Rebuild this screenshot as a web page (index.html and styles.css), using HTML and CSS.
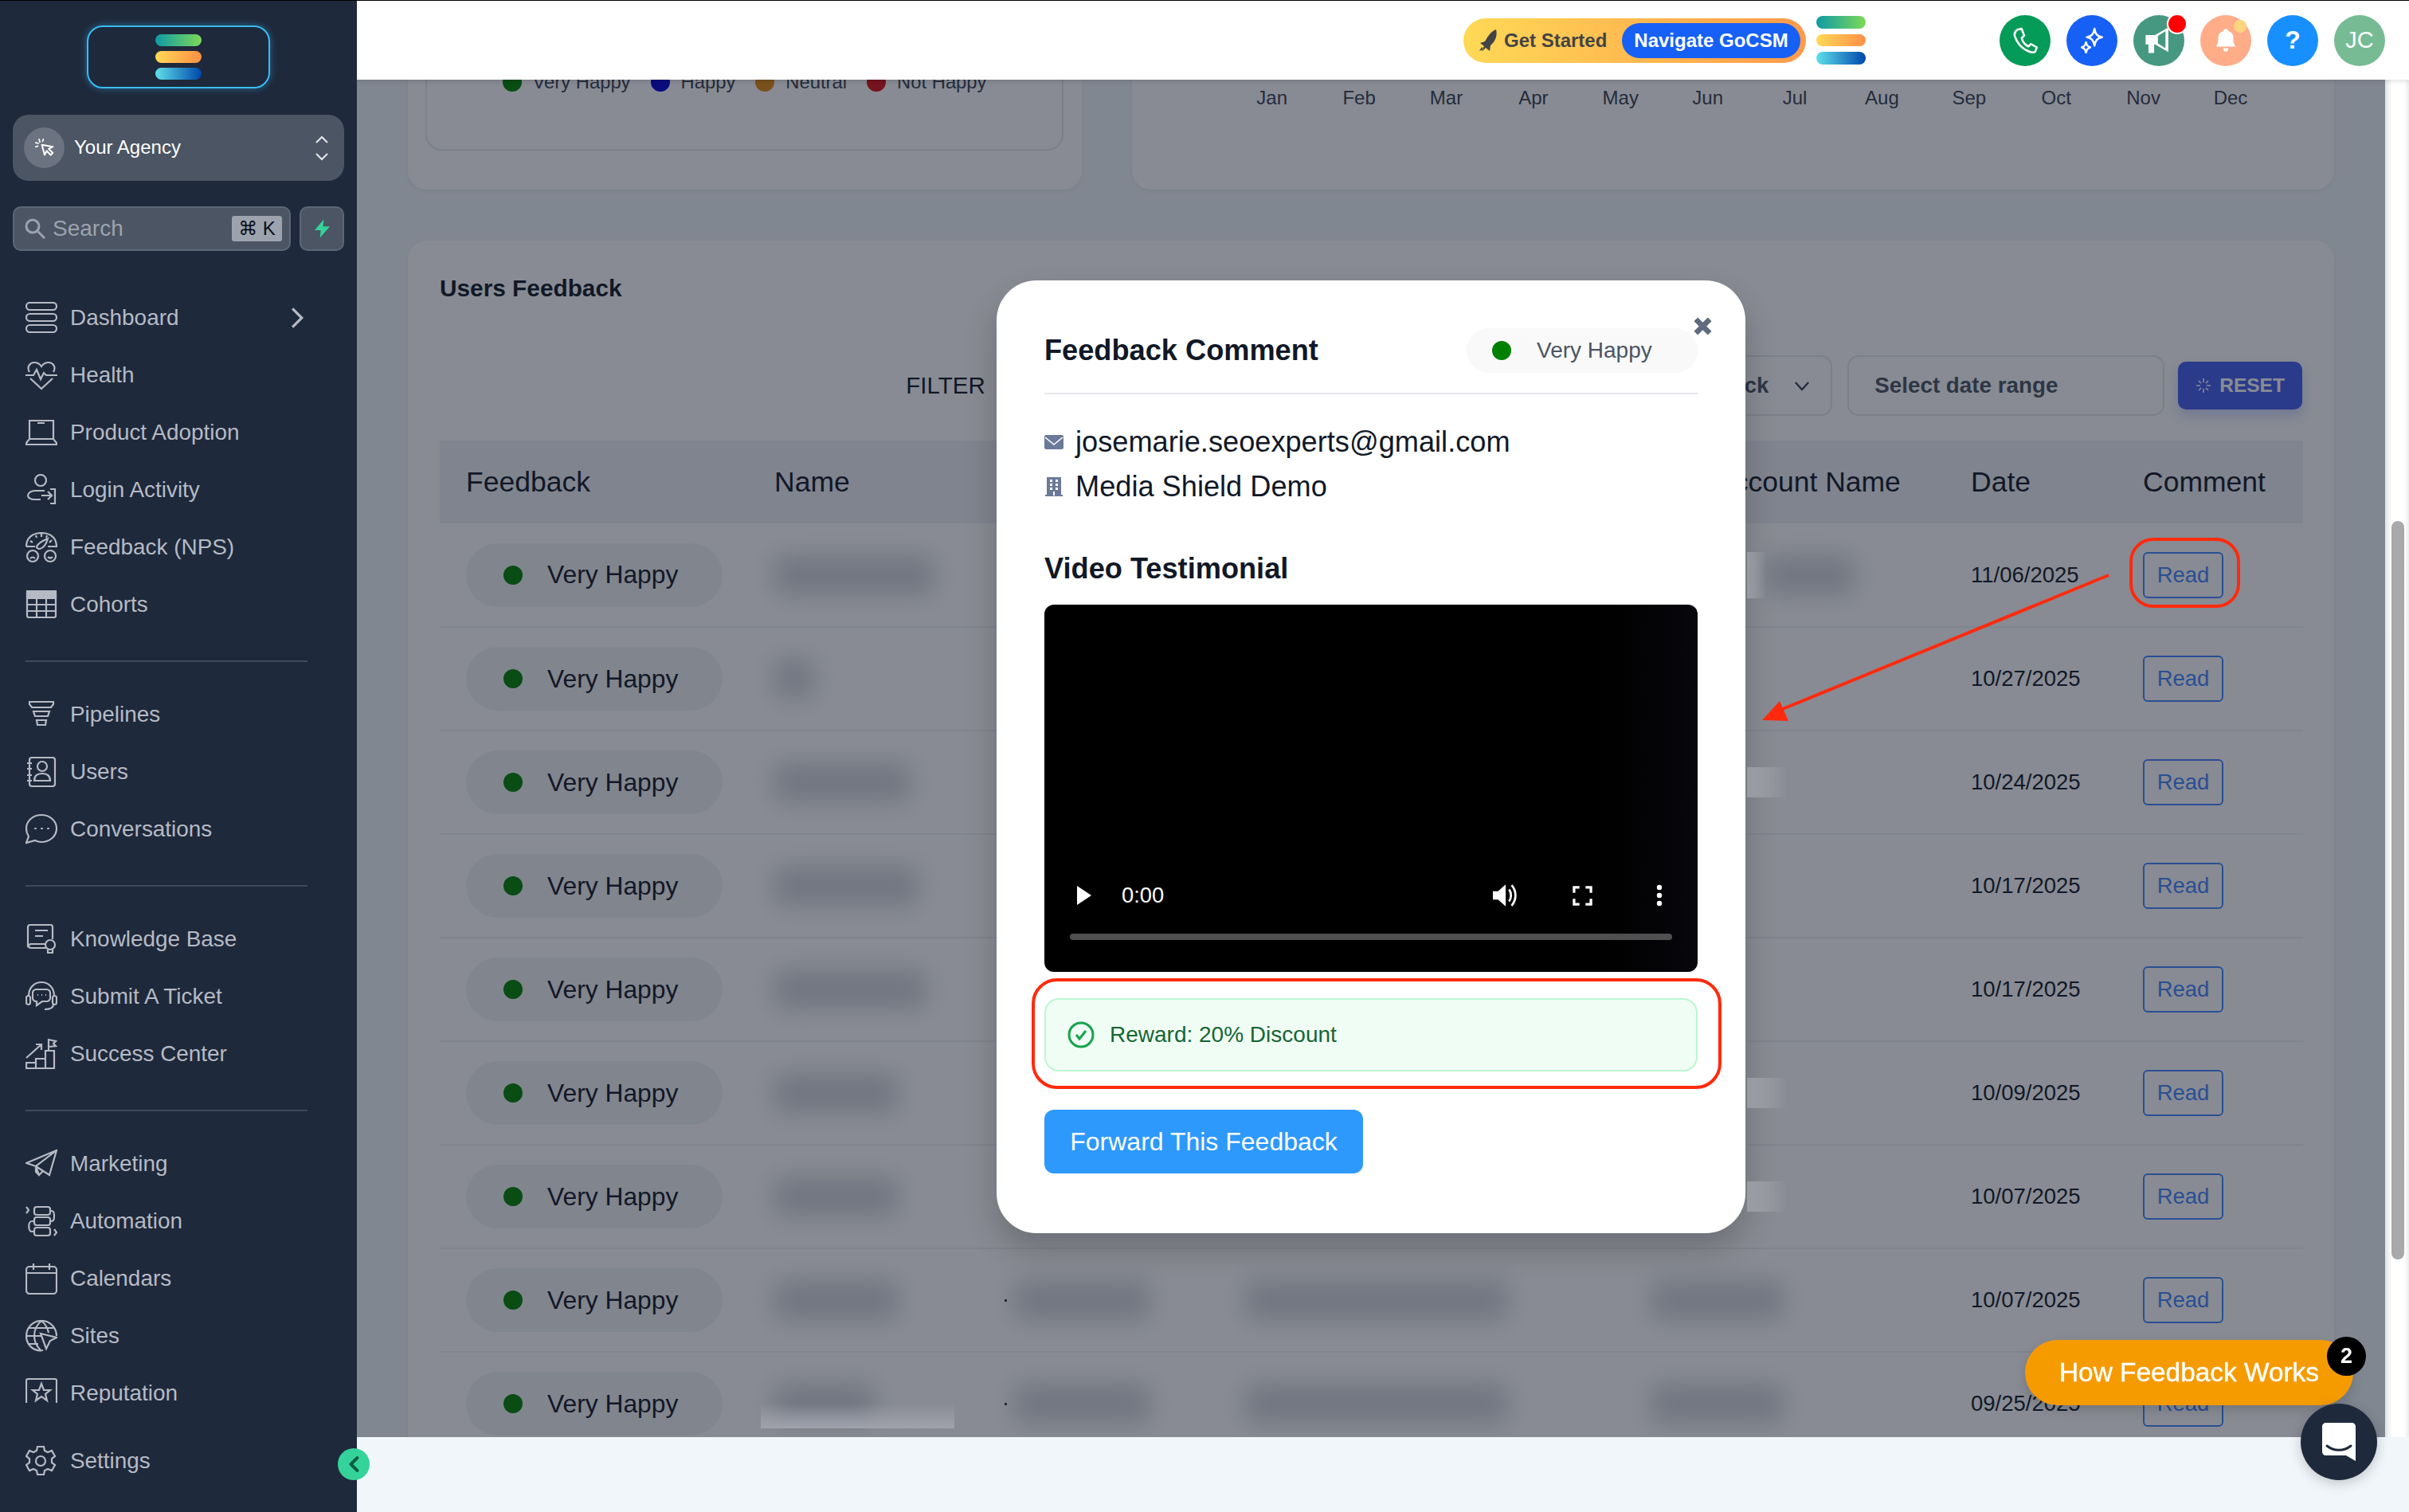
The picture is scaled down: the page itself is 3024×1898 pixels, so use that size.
FILE: index.html
```html
<!DOCTYPE html>
<html lang="en">
<head>
    <meta charset="UTF-8">
    <title>Users Feedback</title>
    <link rel="stylesheet" href="styles.css">
</head>
<body>
<div class="app">
    <aside class="sidebar">
        <div class="logo-box">
            <div class="logo-bars">
                <span class="bar bar-green"></span>
                <span class="bar bar-orange"></span>
                <span class="bar bar-blue"></span>
            </div>
        </div>
        <div class="agency">
            <span class="agency-avatar">
                <svg viewBox="0 0 28 28" class="agency-icon"><path d="M10 9l4 15 3-6 6 6 3-3-6-6 6-3z" fill="none" stroke="#fff" stroke-width="2.4" stroke-linejoin="round"/><path d="M6 1l1 4M1 6l4 1M1 12l3-1M12 1l-1 3" stroke="#fff" stroke-width="2" stroke-linecap="round"/></svg>
            </span>
            <span class="agency-name">Your Agency</span>
            <svg viewBox="0 0 16 32" class="agency-arrows"><path d="M1 9l7-7 7 7M1 23l7 7 7-7" fill="none" stroke="#e5e7eb" stroke-width="2"/></svg>
        </div>
        <div class="search-row">
            <div class="search">
                <svg viewBox="0 0 26 26" class="search-icon"><circle cx="10" cy="10" r="8" fill="none" stroke="#9ca3af" stroke-width="3"/><path d="M16 16l9 9" stroke="#9ca3af" stroke-width="3"/></svg>
                <span class="search-text">Search</span>
                <kbd class="search-key">⌘ K</kbd>
            </div>
            <div class="bolt-btn">
                <svg viewBox="0 0 22 24" class="bolt-icon"><path d="M13 0L1 14h8l-1 10 13-15h-9z" fill="#34d399"/></svg>
            </div>
        </div>

        <nav class="nav">
            <a class="nav-item">
                <svg class="nav-icon" viewBox="0 0 40 40"><rect x="1" y="1" width="38" height="9" rx="4.5"/><rect x="1" y="15" width="38" height="9" rx="4.5"/><rect x="1" y="29" width="38" height="9" rx="4.5"/></svg>
                Dashboard
                <svg class="nav-more" viewBox="0 0 16 26"><path d="M2 2l11 11L2 24" fill="none" stroke="currentColor" stroke-width="3"/></svg>
            </a>
            <a class="nav-item">
                <svg class="nav-icon" viewBox="0 0 40 40"><path d="M5 16c-4-7 1-12 6-12 4 0 7 2 9 5 2-3 5-5 9-5 5 0 10 5 6 12M6 24l14 13 14-13"/><path d="M0 20h10l4-7 5 12 4-8 3 3h14"/></svg>
                Health
            </a>
            <a class="nav-item">
                <svg class="nav-icon" viewBox="0 0 40 40"><path d="M5 28V5h30v23M1 33l4-5h30l4 5v2H1zM15 8h9"/></svg>
                Product Adoption
            </a>
            <a class="nav-item">
                <svg class="nav-icon" viewBox="0 0 40 40"><circle cx="19" cy="8" r="7"/><path d="M24 21H12c-5 0-9 3-9 6s4 5 8 5h8M20 27h13M28 22l5 5-5 5M31 19h6v18h-6"/></svg>
                Login Activity
            </a>
            <a class="nav-item">
                <svg class="nav-icon" viewBox="0 0 40 40"><path d="M1 19C1 8 9 2 20 2s19 6 19 17H28M1 19h11M6 12l3 2M20 3v4M33 11l-3 3M13 5l1 3M27 5l-1 3"/><path d="M14 19c2-4 7-7 14-10-2 7-6 12-10 13-2 0-4-1-4-3z"/><circle cx="9" cy="31" r="7"/><circle cx="31" cy="31" r="7"/><path d="M6 34c2-2 4-2 6 0M28 32c2 2 4 2 6 0"/></svg>
                Feedback (NPS)
            </a>
            <a class="nav-item">
                <svg class="nav-icon" viewBox="0 0 40 40"><rect x="2" y="3" width="36" height="33" rx="2"/><path d="M2 3h36v9H2z" class="fill-on"/><path d="M2 20h36M2 28h36M14 12v24M26 12v24"/></svg>
                Cohorts
            </a>
            <hr class="nav-line">
            <a class="nav-item">
                <svg class="nav-icon" viewBox="0 0 40 40"><path d="M5 4h30v3l-3 4H8L5 7zM10 16h20l-2 6H12zM14 27h12l-1 6H15z"/></svg>
                Pipelines
            </a>
            <a class="nav-item">
                <svg class="nav-icon" viewBox="0 0 40 40"><rect x="5" y="2" width="32" height="36" rx="3"/><circle cx="21" cy="13" r="6"/><path d="M11 31c0-6 4-9 10-9s10 3 10 9zM2 9h6M2 16h6M2 24h6M2 31h6"/></svg>
                Users
            </a>
            <a class="nav-item">
                <svg class="nav-icon" viewBox="0 0 40 40"><path d="M20 2c10 0 19 7 19 17s-9 17-19 17c-3 0-6-1-8-2l-11 3 3-8c-2-3-3-6-3-10C1 9 10 2 20 2z"/><path d="M12 19h1M20 19h1M28 19h1" stroke-linecap="round"/></svg>
                Conversations
            </a>
            <hr class="nav-line">
            <a class="nav-item">
                <svg class="nav-icon" viewBox="0 0 40 40"><path d="M26 31H7c-4 0-4-5 0-5h19M7 26c-2 0-3 1-4 2V5c0-2 1-3 3-3h26c1 0 2 1 2 3v15"/><path d="M12 9h16M12 16h10"/><circle cx="31" cy="27" r="6"/><path d="M28 33v4h6v-4"/></svg>
                Knowledge Base
            </a>
            <a class="nav-item">
                <svg class="nav-icon" viewBox="0 0 40 40"><path d="M4 19C4 9 11 2 20 2s16 7 16 17M35 30c0 4-4 6-11 6"/><rect x="1" y="19" width="5" height="11" rx="2.5"/><rect x="34" y="19" width="5" height="11" rx="2.5"/><path d="M13 11h14c2 0 4 2 4 4v7c0 2-2 4-4 4h-6l-7 5v-5h-1c-2 0-4-2-4-4v-7c0-2 2-4 4-4zM15 18h1M20 18h1M25 18h1"/></svg>
                Submit A Ticket
            </a>
            <a class="nav-item">
                <svg class="nav-icon" viewBox="0 0 40 40"><path d="M1 38v-7h12v7zM13 38V26h12v12zM25 38V16h11v22zM1 38h36M1 25L20 8M13 8h7v7"/><path d="M29 16V2l9 2-3 3 3 3-9 1"/></svg>
                Success Center
            </a>
            <hr class="nav-line">
            <a class="nav-item">
                <svg class="nav-icon" viewBox="0 0 40 40"><path d="M39 3L1 19l12 4 17 11zM39 3L13 23l4 11 5-5M13 23v7l4 4"/></svg>
                Marketing
            </a>
            <a class="nav-item">
                <svg class="nav-icon" viewBox="0 0 40 40"><rect x="11" y="2" width="20" height="10" rx="3"/><rect x="11" y="15" width="20" height="10" rx="3"/><rect x="11" y="28" width="20" height="10" rx="3"/><path d="M31 7h2c4 0 4 13 0 13h-2M11 20H8c-5 0-5 13 0 13h3M1 2l3 4-3 4M36 30l3 4-3 4"/></svg>
                Automation
            </a>
            <a class="nav-item">
                <svg class="nav-icon" viewBox="0 0 40 40"><rect x="1" y="5" width="38" height="34" rx="4"/><path d="M1 13h38M10 1v8M30 1v8"/></svg>
                Calendars
            </a>
            <a class="nav-item">
                <svg class="nav-icon" viewBox="0 0 40 40"><path d="M22 38C10 40 1 31 1 20a19 19 0 0 1 38 0M20 1c-6 5-9 12-9 19s3 13 8 18M20 1c5 4 8 10 9 15M4 10h32M1 20h20M4 30h12"/><path d="M19 17l20 5-8 4-5 10z"/></svg>
                Sites
            </a>
            <a class="nav-item">
                <svg class="nav-icon" viewBox="0 0 40 40"><path d="M1 40V4c0-1 1-2 2-2h34c1 0 2 1 2 2v36"/><path d="M20 8l3 8h8l-6 5 2 8-7-5-7 5 2-8-6-5h8z"/></svg>
                Reputation
            </a>
        </nav>

        <a class="nav-item nav-settings">
            <svg class="nav-icon" viewBox="0 0 40 40"><circle cx="19" cy="20" r="6"/><path d="M15 2h8l1 5 4 2 5-2 4 7-4 3v5l4 3-4 7-5-2-4 2-1 5h-8l-1-5-4-2-5 2-4-7 4-3v-5l-4-3 4-7 5 2 4-2z"/></svg>
            Settings
        </a>
        <button class="collapse-btn">
            <svg viewBox="0 0 16 22"><path d="M13 2L4 11l9 9" fill="none" stroke="#0e5a45" stroke-width="4.5" stroke-linecap="round" stroke-linejoin="round"/></svg>
        </button>
    </aside>

    <div class="main">
        <header class="topbar">
            <div class="start-pill">
                <svg viewBox="0 0 24 28" class="rocket"><path d="M22 0c2 8-1 15-7 20l-1 7-5-4-4 4-1-1 3-5-5-4 6-2C12 8 16 2 22 0zM4 22l-3 5 5-2z" fill="#444"/></svg>
                <span class="start-label">Get Started</span>
                <span class="start-btn">Navigate GoCSM</span>
            </div>
            <div class="mini-logo">
                <span class="bar bar-green"></span>
                <span class="bar bar-orange"></span>
                <span class="bar bar-blue"></span>
            </div>
            <div class="top-icons">
                <span class="top-icon ic-phone"><svg viewBox="0 0 32 32"><path d="M7 3l5-1 3 8-3 3c1 4 4 8 8 10l3-3 7 4-2 5c-2 2-5 1-9-1C12 25 6 18 4 11c-1-3 0-6 3-8z" fill="none" stroke="#fff" stroke-width="2.4" stroke-linejoin="round"/></svg></span>
                <span class="top-icon ic-spark"><svg viewBox="0 0 32 32"><path d="M19 2c1 6 3 9 9 10-6 1-8 4-9 10-1-6-3-9-9-10 6-1 8-4 9-10zM9 18c1 4 2 5 5 6-3 1-4 2-5 6-1-4-2-5-5-6 3-1 4-2 5-6z" fill="none" stroke="#fff" stroke-width="2.4" stroke-linejoin="round"/></svg></span>
                <span class="top-icon ic-megaphone"><svg viewBox="0 0 32 32" class="megaphone"><path d="M2 10h10L26 2v26l-14-8h-1v9H5v-9H2z" fill="#fff"/><path d="M15 11l8-5v18l-8-5z" fill="#479880"/></svg><i class="badge-red"></i></span>
                <span class="top-icon ic-bell"><svg viewBox="0 0 32 32"><path d="M16 2c2 0 3 1 3 3 5 1 6 5 6 9 0 5 1 7 3 9H4c2-2 3-4 3-9 0-4 1-8 6-9 0-2 1-3 3-3zM13 25h6c0 3-1 4-3 4s-3-1-3-4z" fill="#fff"/></svg><i class="badge-yellow"></i></span>
                <span class="top-icon ic-help">?</span>
                <span class="top-icon ic-user">JC</span>
            </div>
        </header>

        <div class="content">
            <div class="scroll-body">
                <section class="charts">
                    <div class="card chart-left">
                        <div class="legend-box">
                            <span class="legend-item"><i class="dot dot-green"></i>Very Happy</span>
                            <span class="legend-item"><i class="dot dot-blue"></i>Happy</span>
                            <span class="legend-item"><i class="dot dot-amber"></i>Neutral</span>
                            <span class="legend-item"><i class="dot dot-red"></i>Not Happy</span>
                        </div>
                    </div>
                    <div class="card chart-right">
                        <div class="months">
                            <span>Jan</span><span>Feb</span><span>Mar</span><span>Apr</span><span>May</span><span>Jun</span>
                            <span>Jul</span><span>Aug</span><span>Sep</span><span>Oct</span><span>Nov</span><span>Dec</span>
                        </div>
                    </div>
                </section>

                <section class="card feedback-card">
                    <h2 class="card-title">Users Feedback</h2>
                    <div class="filters">
                        <span class="filter-label">FILTER</span>
                        <div class="select">
                            Feedback
                            <svg viewBox="0 0 22 14" class="select-arrow"><path d="M2 2l9 10 9-10" fill="none" stroke="#374151" stroke-width="2.5"/></svg>
                        </div>
                        <div class="date-range">Select date range</div>
                        <button class="reset-btn">
                            <svg viewBox="0 0 20 20" class="reset-icon"><path d="M10 1v5M10 14v5M1 10h5M14 10h5M4 4l3 3M13 13l3 3M16 4l-3 3M7 13l-3 3" stroke="#fff" stroke-width="1.6"/></svg>
                            RESET
                        </button>
                    </div>

                    <table class="feedback-table">
                        <thead>
                            <tr><th>Feedback</th><th>Name</th><th></th><th></th><th>Account Name</th><th>Date</th><th>Comment</th></tr>
                        </thead>
                        <tbody>
                            <tr><td><span class="mood"><i class="dot dot-green"></i>Very Happy</span></td><td><span class="blob w-200"></span></td><td></td><td></td><td><span class="acc-pair"><span class="acc-edge acc-edge-thin"></span><span class="blob w-110"></span></span></td><td>11/06/2025</td><td><button class="read-btn">Read</button></td></tr>
                            <tr><td><span class="mood"><i class="dot dot-green"></i>Very Happy</span></td><td><span class="blob w-50"></span></td><td></td><td></td><td></td><td>10/27/2025</td><td><button class="read-btn">Read</button></td></tr>
                            <tr><td><span class="mood"><i class="dot dot-green"></i>Very Happy</span></td><td><span class="blob w-170"></span></td><td></td><td></td><td><span class="acc-pair"><span class="acc-edge"></span></span></td><td>10/24/2025</td><td><button class="read-btn">Read</button></td></tr>
                            <tr><td><span class="mood"><i class="dot dot-green"></i>Very Happy</span></td><td><span class="blob w-180"></span></td><td></td><td></td><td></td><td>10/17/2025</td><td><button class="read-btn">Read</button></td></tr>
                            <tr><td><span class="mood"><i class="dot dot-green"></i>Very Happy</span></td><td><span class="blob w-190"></span></td><td></td><td></td><td></td><td>10/17/2025</td><td><button class="read-btn">Read</button></td></tr>
                            <tr><td><span class="mood"><i class="dot dot-green"></i>Very Happy</span></td><td><span class="blob w-155"></span></td><td></td><td></td><td><span class="acc-pair"><span class="acc-edge"></span></span></td><td>10/09/2025</td><td><button class="read-btn">Read</button></td></tr>
                            <tr><td><span class="mood"><i class="dot dot-green"></i>Very Happy</span></td><td><span class="blob w-155"></span></td><td></td><td></td><td><span class="acc-pair"><span class="acc-edge"></span></span></td><td>10/07/2025</td><td><button class="read-btn">Read</button></td></tr>
                            <tr><td><span class="mood"><i class="dot dot-green"></i>Very Happy</span></td><td><span class="blob w-155"></span></td><td class="has-dot"><span class="blob w-170"></span></td><td><span class="blob w-330"></span></td><td><span class="blob acc-wide"></span></td><td>10/07/2025</td><td><button class="read-btn">Read</button></td></tr>
                            <tr><td class="last-row"><span class="mood"><i class="dot dot-green"></i>Very Happy</span></td><td class="fade-cell"><span class="blob w-125"></span><span class="name-fade"></span></td><td class="has-dot"><span class="blob w-170"></span></td><td><span class="blob w-330"></span></td><td><span class="blob acc-wide"></span></td><td>09/25/2025</td><td><button class="read-btn">Read</button></td></tr>
                        </tbody>
                    </table>
                </section>
            </div>
            <div class="scrollbar"><span class="scroll-thumb"></span></div>

            <div class="scrim">
                <div class="modal">
                    <svg viewBox="0 0 26 26" class="modal-close"><path d="M4 4l18 18M22 4L4 22" stroke="#5f6b7e" stroke-width="7"/></svg>
                    <div class="modal-head">
                        <h3 class="modal-title">Feedback Comment</h3>
                        <span class="modal-mood"><i class="dot dot-green"></i>Very Happy</span>
                    </div>
                    <div class="modal-line">
                        <svg viewBox="0 0 24 18" class="line-icon"><rect width="24" height="18" rx="2" fill="#6b7a99"/><path d="M1 3l11 9 11-9" fill="none" stroke="#fff" stroke-width="1.6"/></svg>
                        josemarie.seoexperts@gmail.com
                    </div>
                    <div class="modal-line">
                        <svg viewBox="0 0 24 24" class="line-icon"><path d="M3 0h18v22h2v2H1v-2h2z" fill="#6b7a99"/><path d="M7 3h3v3H7zM14 3h3v3h-3zM7 8h3v3H7zM14 8h3v3h-3zM7 13h3v3H7zM14 13h3v3h-3zM11 18h2v5h-2z" fill="#fff"/></svg>
                        Media Shield Demo
                    </div>
                    <h3 class="video-title">Video Testimonial</h3>
                    <div class="video">
                        <div class="video-controls">
                            <svg viewBox="0 0 18 24" class="vc-play"><path d="M0 0l18 12L0 24z" fill="#fff"/></svg>
                            <span class="vc-time">0:00</span>
                            <svg viewBox="0 0 30 30" class="vc-volume"><path d="M1 10h6l9-8v26l-9-8H1z" fill="#fff"/><path d="M20 8c3 4 3 10 0 14M23 3c6 7 6 17 0 24" fill="none" stroke="#fff" stroke-width="2.6"/></svg>
                            <svg viewBox="0 0 26 26" class="vc-full"><path d="M2 9V2h7M17 2h7v7M24 17v7h-7M9 24H2v-7" fill="none" stroke="#fff" stroke-width="3.4"/></svg>
                            <svg viewBox="0 0 8 28" class="vc-more"><circle cx="4" cy="4" r="3.2" fill="#fff"/><circle cx="4" cy="14" r="3.2" fill="#fff"/><circle cx="4" cy="24" r="3.2" fill="#fff"/></svg>
                        </div>
                        <div class="video-progress"></div>
                    </div>
                    <div class="reward">
                        <svg viewBox="0 0 34 34" class="reward-icon"><circle cx="17" cy="17" r="15" fill="none" stroke="#16a34a" stroke-width="3"/><path d="M11 17l4 5 8-10" fill="none" stroke="#16a34a" stroke-width="3"/></svg>
                        Reward: 20% Discount
                    </div>
                    <button class="forward-btn">Forward This Feedback</button>
                </div>
            </div>
        </div>

        <div class="bottom-strip"></div>
    </div>
</div>

<button class="how-pill">How Feedback Works<span class="how-badge">2</span></button>
<button class="chat-btn">
    <svg viewBox="0 0 42 48"><path d="M5 0h32c3 0 5 2 5 5v43l-12-7H5c-3 0-5-2-5-5V5c0-3 2-5 5-5z" fill="#fff"/><path d="M6 29c9 7 21 7 30 0" fill="none" stroke="#1e293b" stroke-width="3" stroke-linecap="round"/></svg>
</button>

<!-- red marks drawn on top of the screenshot -->
<svg class="marks" viewBox="0 0 3024 1898">
    <rect x="2675" y="677" width="135" height="84" rx="28"/>
    <rect x="1297" y="1230" width="862" height="135" rx="30"/>
    <path d="M2647 722L2228 894"/>
    <path d="M2212 904l22-24 11 25z" class="mark-head"/>
</svg>
</body>
</html>
```

FILE: styles.css
```css
* {
    box-sizing: border-box;
}
html, body {
    margin: 0;
    height: 100%;
    overflow: hidden;
}
body {
    font-family: 'Liberation Sans', Arial, sans-serif;
    font-size: 27.5px;
    color: #111827;
    background: #f1f6fa;
}
button {
    font-family: inherit;
    cursor: pointer;
}
h2, h3 {
    margin: 0;
}
i {
    font-style: normal;
}

.app {
    display: flex;
    width: 3024px;
    height: 1898px;
    border-top: 1px solid #000;
}

/* sidebar */
.sidebar {
    position: relative;
    z-index: 3;
    flex: none;
    width: 448px;
    padding: 31px 16px 0;
    background: #1e293b;
}
.logo-box {
    display: flex;
    align-items: center;
    justify-content: center;
    width: 230px;
    height: 79px;
    margin: 0 0 33px 93px;
    border: 2px solid #38bdf8;
    border-radius: 20px;
    box-shadow: 0 0 10px rgba(56, 189, 248, 0.45);
}
.logo-bars {
    display: flex;
    flex-direction: column;
    gap: 6px;
    width: 58px;
}
.bar {
    display: block;
    height: 15px;
    border-radius: 8px;
}
.bar-green {
    background: linear-gradient(90deg, #0e9aa7, #7ed957);
}
.bar-orange {
    background: linear-gradient(90deg, #ffd956, #ff8f45);
}
.bar-blue {
    background: linear-gradient(90deg, #5fe0ea, #0047ab);
}
.agency {
    display: flex;
    align-items: center;
    height: 83px;
    padding: 0 20px 0 14px;
    background: #4b5563;
    border-radius: 20px;
    color: #fff;
    font-size: 24px;
}
.agency-avatar {
    display: flex;
    align-items: center;
    justify-content: center;
    width: 51px;
    height: 51px;
    margin-right: 12px;
    border-radius: 50%;
    background: #6b7280;
}
.agency-icon {
    width: 24px;
    height: 24px;
}
.agency-name {
    flex: 1;
    margin-top: -2px;
}
.agency-arrows {
    width: 16px;
    height: 32px;
}
.search-row {
    display: flex;
    gap: 11px;
    margin-top: 32px;
}
.search {
    display: flex;
    align-items: center;
    flex: 1;
    height: 56px;
    padding: 0 9px 0 13px;
    background: #4b5563;
    border: 2px solid #5c6675;
    border-radius: 10px;
}
.search-icon {
    width: 26px;
    height: 26px;
    margin-right: 9px;
}
.search-text {
    flex: 1;
    font-size: 28px;
    color: #9ca3af;
}
.search-key {
    display: block;
    width: 63px;
    height: 32px;
    border-radius: 3px;
    background: #9ca3af;
    color: #0b0f19;
    font: 24px/32px 'Liberation Sans', 'DejaVu Sans', sans-serif;
    text-align: center;
}
.bolt-btn {
    display: flex;
    align-items: center;
    justify-content: center;
    width: 56px;
    height: 56px;
    background: #4b5563;
    border: 2px solid #5c6675;
    border-radius: 10px;
}
.bolt-icon {
    width: 21px;
    height: 24px;
}
.nav {
    height: 1398px;
    margin-top: 48px;
    overflow: hidden;
}
.nav-item {
    display: flex;
    align-items: center;
    height: 72px;
    padding-left: 16px;
    color: #b6bac4;
    font-size: 27.9px;
}
.nav-icon {
    flex: none;
    width: 40px;
    height: 40px;
    margin-right: 16px;
    fill: none;
    stroke: currentColor;
    stroke-width: 2.2;
}
.fill-on {
    fill: currentColor;
}
.nav-more {
    width: 17px;
    height: 28px;
    margin-left: 141px;
}
.nav-line {
    width: 354px;
    height: 2px;
    margin: 34px 0 30px 16px;
    border: none;
    background: #3e4a5c;
}
.nav-settings {
    margin-top: 37px;
}
.collapse-btn {
    position: absolute;
    right: -16px;
    top: 1817px;
    display: flex;
    align-items: center;
    justify-content: center;
    width: 40px;
    height: 40px;
    padding: 0;
    border: none;
    border-radius: 50%;
    background: #34d399;
}
.collapse-btn svg {
    width: 14px;
    height: 20px;
}

/* main column */
.main {
    display: flex;
    flex-direction: column;
    flex: 1;
    min-width: 0;
}
.topbar {
    position: relative;
    z-index: 2;
    display: flex;
    align-items: center;
    justify-content: flex-end;
    flex: none;
    height: 99px;
    padding-right: 30px;
    background: #fff;
    box-shadow: 0 2px 6px rgba(0, 0, 0, 0.12);
}
.start-pill {
    display: flex;
    align-items: center;
    width: 430px;
    height: 56px;
    padding: 0 7px 0 19px;
    border-radius: 28px;
    background: linear-gradient(90deg, #ffd956, #ff9a4a);
}
.rocket {
    width: 24px;
    height: 28px;
    margin-right: 8px;
}
.start-label {
    flex: 1;
    color: #444;
    font-size: 24px;
    font-weight: bold;
}
.start-btn {
    display: flex;
    align-items: center;
    justify-content: center;
    width: 224px;
    height: 44px;
    border-radius: 22px;
    background: #1660f5;
    color: #fff;
    font-size: 24px;
    font-weight: bold;
}
.mini-logo {
    display: flex;
    flex-direction: column;
    gap: 7px;
    width: 62px;
    margin-left: 13px;
}
.mini-logo .bar {
    height: 15.5px;
}
.top-icons {
    display: flex;
    gap: 20px;
    margin-left: 168px;
}
.top-icon {
    position: relative;
    display: flex;
    align-items: center;
    justify-content: center;
    width: 64px;
    height: 64px;
    border-radius: 50%;
    color: #fff;
    font-size: 32px;
}
.top-icon svg {
    width: 34px;
    height: 34px;
}
.top-icon .megaphone {
    width: 38px;
    height: 38px;
}
.ic-phone {
    background: #049a58;
}
.ic-spark {
    background: #1660f5;
}
.ic-megaphone {
    background: #479880;
}
.ic-bell {
    background: #ffac88;
}
.ic-help {
    background: #188fff;
    font-weight: bold;
}
.ic-user {
    background: #76bb94;
    font-size: 29px;
}
.badge-red {
    position: absolute;
    top: -2px;
    right: -4px;
    width: 26px;
    height: 26px;
    border: 2px solid #fff;
    border-radius: 50%;
    background: #f00;
}
.badge-yellow {
    position: absolute;
    top: 6px;
    right: 6px;
    width: 16px;
    height: 16px;
    border-radius: 50%;
    background: #ffd580;
}

.content {
    position: relative;
    display: flex;
    flex: none;
    height: 1704px;
    overflow: hidden;
}
.scroll-body {
    flex: 1;
    min-width: 0;
    padding: 0 64px;
}
.scrollbar {
    flex: none;
    width: 30px;
    padding: 554px 6px 0 8px;
    background: linear-gradient(90deg, #e4e4e4, #fff 30%, #fff 80%, #ececec);
}
.scroll-thumb {
    display: block;
    width: 16px;
    height: 927px;
    border-radius: 8px;
    background: #a9a9a9;
}
.scrim {
    position: absolute;
    left: 0;
    top: 0;
    right: 30px;
    bottom: 0;
    display: flex;
    align-items: center;
    justify-content: center;
    padding-bottom: 4px;
    background: rgba(17, 24, 39, 0.5);
}
.card {
    background: #fff;
    border-radius: 24px;
    box-shadow: 0 2px 6px rgba(0, 0, 0, 0.06);
}
.charts {
    display: flex;
    gap: 63px;
    margin-top: -200px;
}
.chart-left {
    flex: none;
    width: 846px;
    padding: 0 23px 49px 22px;
}
.legend-box {
    display: flex;
    align-items: center;
    justify-content: center;
    gap: 25px;
    height: 289px;
    padding-top: 119px;
    border: 2px solid #e5e7eb;
    border-top: none;
    border-radius: 0 0 20px 20px;
    color: #374151;
    font-size: 23.8px;
}
.legend-item {
    display: flex;
    align-items: center;
    gap: 14px;
}
.chart-right {
    flex: 1;
    height: 338px;
    padding: 207px 0 0 121px;
}
.months {
    display: grid;
    grid-template-columns: repeat(12, 109.4px);
    color: #374151;
    font-size: 24px;
    line-height: 32px;
    text-align: center;
}
.dot {
    flex: none;
    display: block;
    width: 24px;
    height: 24px;
    border-radius: 50%;
}
.dot-green {
    background: #008000;
}
.dot-blue {
    background: #0000d0;
}
.dot-amber {
    background: #e28a12;
}
.dot-red {
    background: #d80f17;
}
.feedback-card {
    height: 1600px;
    margin-top: 64px;
    padding: 43px 40px 0;
}
.card-title {
    font-size: 29.8px;
    line-height: 34px;
    color: #111827;
}
.filters {
    display: flex;
    align-items: center;
    height: 76px;
    margin-top: 67px;
}
.filter-label {
    width: 685px;
    font-size: 29.5px;
    text-align: right;
}
.select {
    display: flex;
    align-items: center;
    justify-content: flex-end;
    gap: 32px;
    width: 1038px;
    height: 76px;
    margin-left: 26px;
    padding-right: 26px;
    border: 2px solid #e5e7eb;
    border-radius: 14px;
    color: #4b5563;
    font-weight: bold;
}
.select-arrow {
    width: 20px;
    height: 13px;
}
.date-range {
    display: flex;
    align-items: center;
    width: 398px;
    height: 76px;
    margin-left: 19px;
    padding-left: 32px;
    border: 2px solid #e5e7eb;
    border-radius: 14px;
    color: #4b5563;
    font-size: 27.8px;
    font-weight: bold;
}
.reset-btn {
    display: flex;
    align-items: center;
    justify-content: center;
    gap: 10px;
    width: 156px;
    height: 60px;
    margin-left: 17px;
    padding: 0;
    border: none;
    border-radius: 10px;
    background: #435eef;
    box-shadow: 0 8px 16px rgba(67, 94, 239, 0.25);
    color: #fff;
    font-size: 24.5px;
    font-weight: bold;
}
.reset-icon {
    width: 20px;
    height: 20px;
}
.feedback-table {
    width: 2339px;
    margin-top: 31px;
    border-collapse: collapse;
    table-layout: fixed;
}
.feedback-table th {
    height: 104px;
    padding: 0 0 0 33px;
    background: #eff0f5;
    font-size: 35.5px;
    font-weight: normal;
    text-align: left;
    white-space: nowrap;
}
.feedback-table th:nth-child(1) { width: 387px; }
.feedback-table th:nth-child(2) { width: 322px; }
.feedback-table th:nth-child(3) { width: 269px; }
.feedback-table th:nth-child(4) { width: 590px; }
.feedback-table th:nth-child(5) { width: 321px; }
.feedback-table th:nth-child(6) { width: 216px; }
.feedback-table th:nth-child(7) { width: 234px; }
.feedback-table td {
    height: 130px;
    padding: 0 0 0 33px;
    border-bottom: 2px solid #eef0f3;
}
.mood {
    display: inline-flex;
    align-items: center;
    gap: 31px;
    width: 322px;
    height: 80px;
    padding-left: 47px;
    border-radius: 40px;
    background: #f1f2f4;
    font-size: 31.8px;
}
.blob {
    display: block;
    height: 50px;
    border-radius: 10px;
    background: #d3d5da;
    filter: blur(15px);
}
.w-50 { width: 50px; }
.w-110 { width: 110px; }
.w-125 { width: 125px; }
.w-155 { width: 155px; }
.w-170 { width: 170px; }
.w-180 { width: 180px; }
.w-190 { width: 190px; }
.w-200 { width: 200px; }
.w-330 { width: 330px; }
/* the blur patches were painted on the picture, so the light edges sit above the scrim */
.acc-pair {
    display: flex;
    align-items: center;
    margin-left: 40px;
}
.acc-edge {
    position: relative;
    z-index: 1;
    flex: none;
    width: 50px;
    height: 38px;
    background: linear-gradient(90deg, #a9abb3, rgba(169, 171, 179, 0));
}
.acc-edge-thin {
    width: 24px;
    height: 58px;
}
.acc-wide {
    width: 165px;
    margin-left: -80px;
}
.has-dot {
    position: relative;
}
.feedback-table .has-dot {
    padding-left: 12px;
}
.has-dot::before {
    content: "";
    position: absolute;
    left: 0;
    top: 63px;
    width: 3px;
    height: 3px;
    background: #111827;
}
.fade-cell {
    position: relative;
}
.name-fade {
    position: absolute;
    z-index: 1;
    left: 16px;
    top: 38px;
    width: 243px;
    height: 57px;
    background: linear-gradient(rgba(160, 163, 173, 0) 45%, #a0a3ad);
}
.read-btn {
    display: block;
    width: 101px;
    height: 58px;
    padding: 0;
    border: 2px solid #4386ff;
    border-radius: 6px;
    background: transparent;
    color: #4386ff;
    font-size: 27.5px;
}

/* modal */
.modal {
    position: relative;
    z-index: 2;
    width: 940px;
    height: 1196px;
    padding: 60px 60px 0;
    border-radius: 50px;
    background: #fff;
    box-shadow: 0 20px 40px rgba(0, 0, 0, 0.2);
}
.modal-close {
    position: absolute;
    top: 45px;
    right: 41px;
    width: 25px;
    height: 25px;
}
.modal-head {
    display: flex;
    align-items: center;
    justify-content: space-between;
    padding-bottom: 25px;
    border-bottom: 2px solid #e5e7eb;
}
.modal-title {
    font-size: 36.2px;
}
.modal-mood {
    display: flex;
    align-items: center;
    gap: 32px;
    width: 290px;
    height: 56px;
    padding-left: 32px;
    border-radius: 28px;
    background: #f9f9f9;
    color: #4b5563;
    font-size: 28px;
}
.modal-line {
    display: flex;
    align-items: center;
    gap: 15px;
    height: 56px;
    font-size: 36.2px;
}
.modal-head + .modal-line {
    margin-top: 32px;
}
.line-icon {
    width: 24px;
    height: 24px;
}
.video-title {
    margin-top: 53px;
    font-size: 36.2px;
    line-height: 44px;
}
.video {
    display: flex;
    flex-direction: column;
    justify-content: flex-end;
    height: 461px;
    margin-top: 23px;
    padding: 0 32px 40px;
    border-radius: 12px;
    background: linear-gradient(90deg, #000 85%, #07070c);
}
.video-controls {
    display: flex;
    align-items: center;
    height: 44px;
    color: #fff;
}
.vc-play {
    width: 18px;
    height: 24px;
    margin-left: 9px;
}
.vc-time {
    margin-left: 38px;
    font-size: 27.3px;
}
.vc-volume {
    width: 32px;
    height: 32px;
    margin-left: auto;
}
.vc-full {
    width: 25px;
    height: 25px;
    margin-left: 69px;
}
.vc-more {
    width: 8px;
    height: 28px;
    margin: 0 12px 0 80px;
}
.video-progress {
    height: 8px;
    margin-top: 26px;
    border-radius: 4px;
    background: #505050;
}
.reward {
    display: flex;
    align-items: center;
    gap: 19px;
    height: 92px;
    margin-top: 33px;
    padding-left: 27px;
    border: 2px solid #bbf7d0;
    border-radius: 18px;
    background: #f0fdf4;
    color: #166534;
    font-size: 28px;
}
.reward-icon {
    width: 34px;
    height: 34px;
}
.forward-btn {
    display: block;
    width: 400px;
    height: 80px;
    margin-top: 48px;
    padding: 0;
    border: none;
    border-radius: 12px;
    background: #2d99fd;
    color: #fff;
    font-size: 32px;
}

.bottom-strip {
    flex: 1;
    background: #f1f6fa;
}

/* floating helpers */
.how-pill {
    position: fixed;
    right: 70px;
    bottom: 134px;
    z-index: 4;
    width: 412px;
    height: 82px;
    padding: 0;
    border: none;
    border-radius: 41px;
    background: #f59b00;
    box-shadow: 0 6px 14px rgba(0, 0, 0, 0.15);
    color: #fff;
    font-size: 33.4px;
    -webkit-text-stroke: 0.4px #fff;
}
.how-badge {
    position: absolute;
    top: -4px;
    right: -16px;
    width: 49px;
    height: 49px;
    border-radius: 50%;
    background: #000;
    color: #fff;
    font-size: 27px;
    font-weight: bold;
    line-height: 49px;
    -webkit-text-stroke: 0;
}
.chat-btn {
    position: fixed;
    right: 40px;
    bottom: 40px;
    z-index: 4;
    display: flex;
    align-items: center;
    justify-content: center;
    width: 96px;
    height: 96px;
    padding: 0;
    border: none;
    border-radius: 50%;
    background: #1e293b;
    box-shadow: 0 4px 16px rgba(0, 0, 0, 0.2);
}
.chat-btn svg {
    width: 42px;
    height: 48px;
}
.marks {
    position: fixed;
    left: 0;
    top: 0;
    z-index: 5;
    width: 3024px;
    height: 1898px;
    pointer-events: none;
    fill: none;
    stroke: #ff2a0d;
    stroke-width: 4;
}
.mark-head {
    fill: #ff2a0d;
    stroke: none;
}
```
